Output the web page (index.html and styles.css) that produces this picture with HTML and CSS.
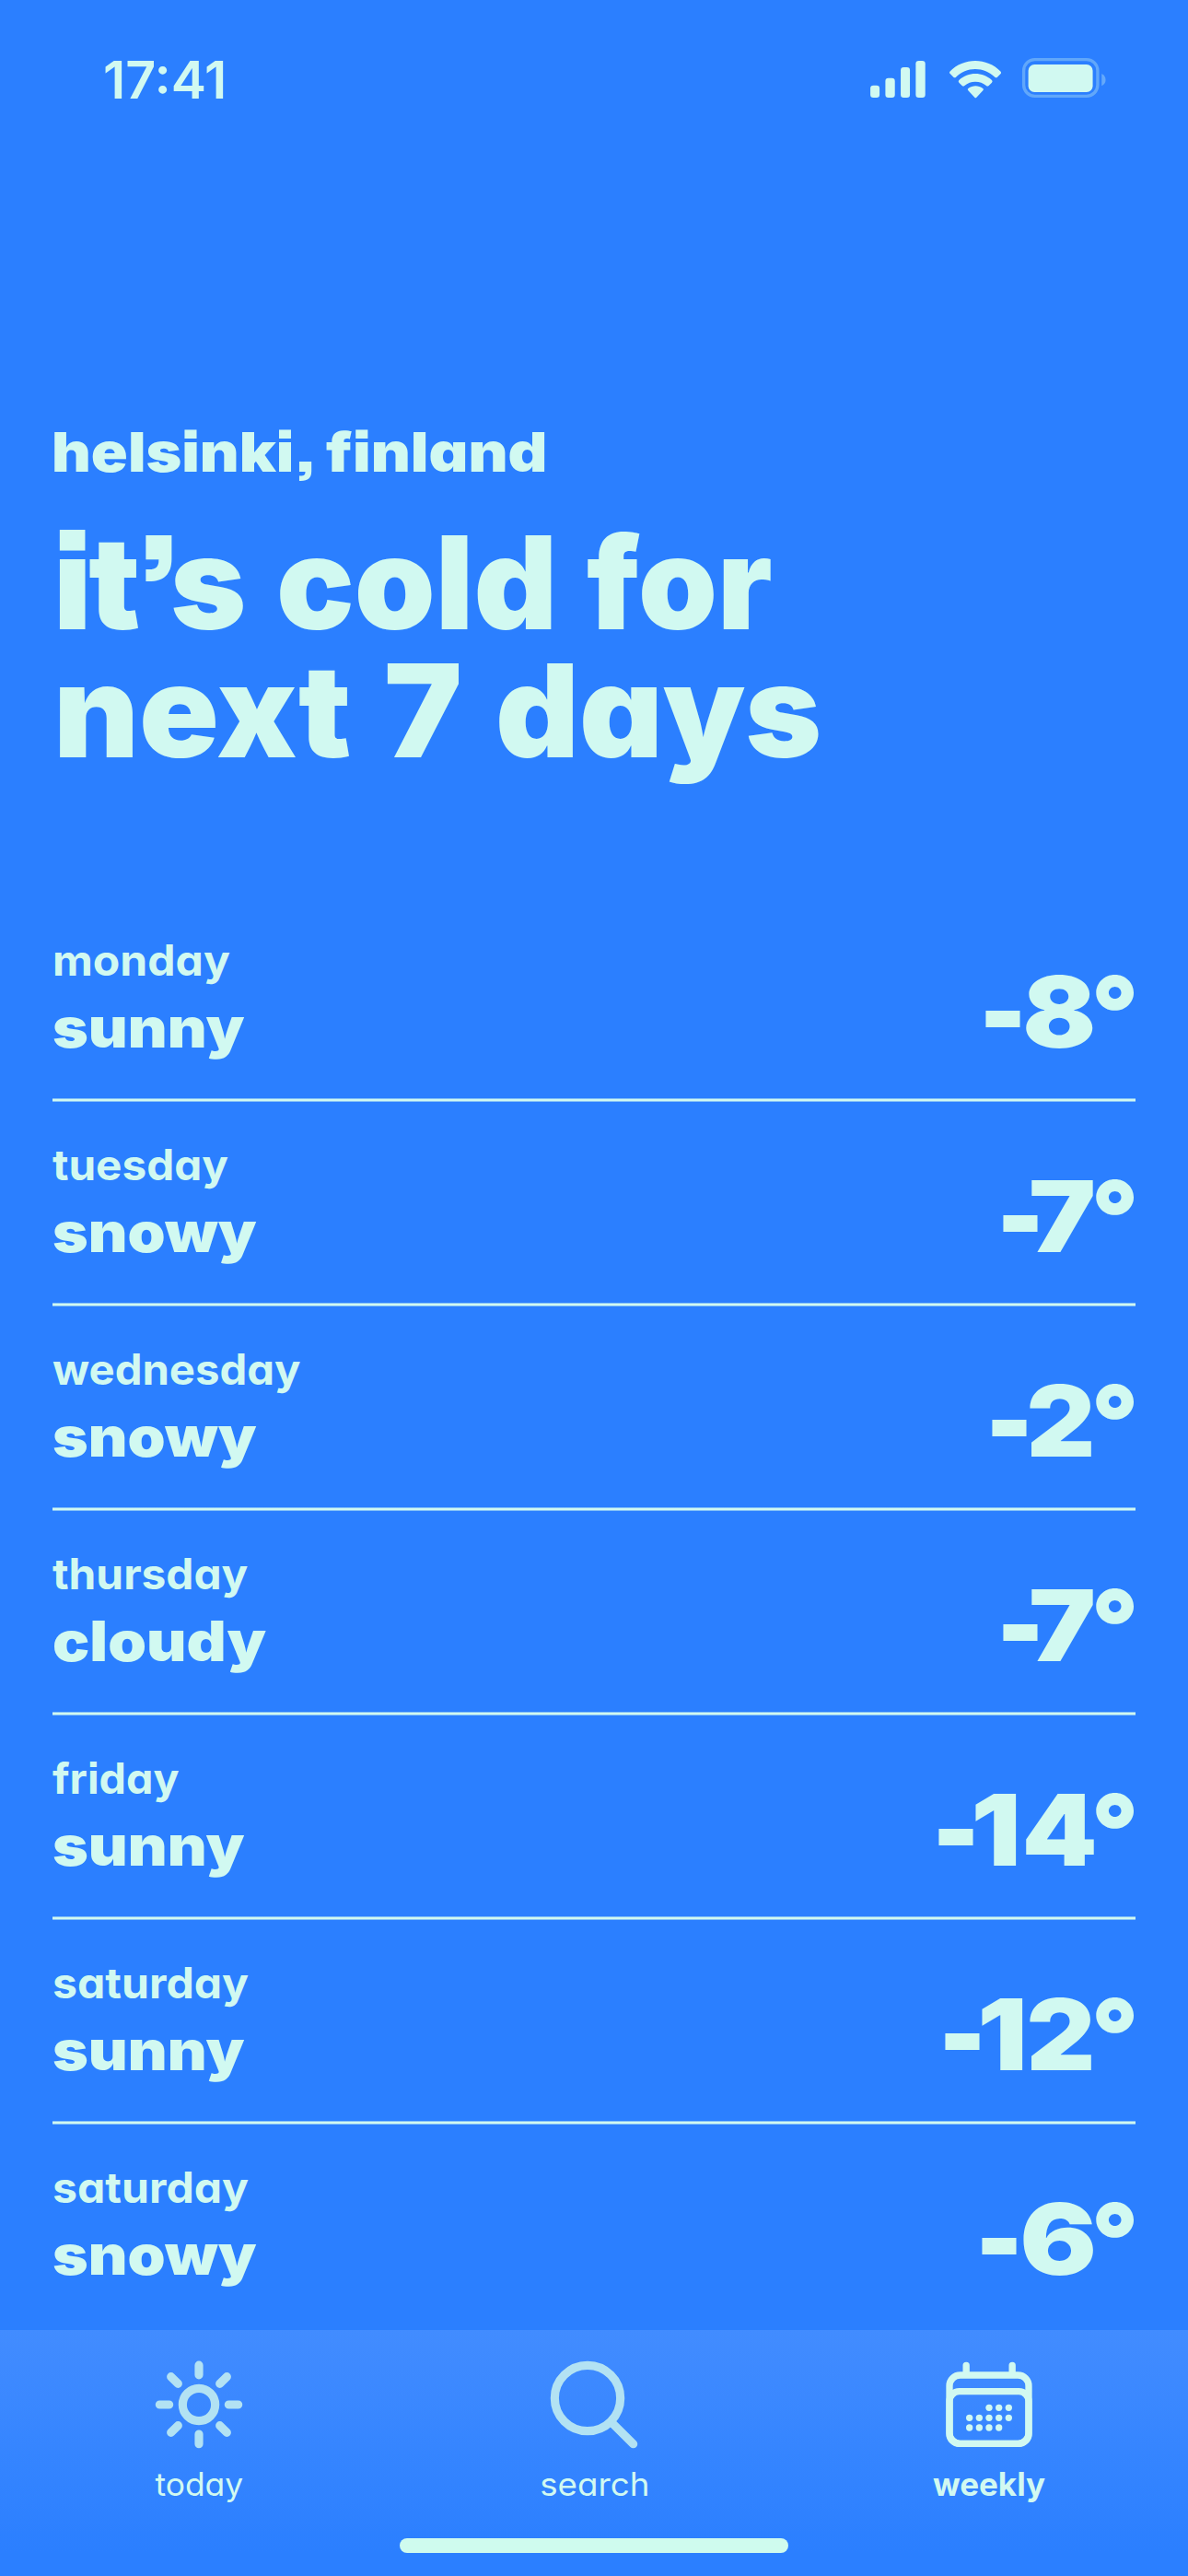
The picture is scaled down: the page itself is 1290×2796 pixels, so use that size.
FILE: index.html
```html
<!DOCTYPE html>
<html lang="en">
<head>
<meta charset="utf-8">
<title>Weekly weather</title>
<link rel="stylesheet" href="styles.css">
</head>
<body>
<div class="screen">
  <header class="status">
    <span class="clock">17:41</span>
    <svg class="status-icons" viewBox="75 60 775 145" aria-hidden="true">
      <rect x="75" y="158" width="30" height="40" rx="10"/>
      <rect x="124" y="134" width="31" height="64" rx="10"/>
      <rect x="174" y="99" width="30" height="99" rx="10"/>
      <rect x="223" y="78" width="31" height="120" rx="10"/>
      <path d="M334 113 C356 90 387 78 417 78 C447 78 478 90 500 113 Q503 117 500 120 L489 131 Q485 134 481 131 C463 114 441 105 417 105 C393 105 371 114 354 131 Q350 134 346 131 L335 120 Q331 117 334 113Z"/>
      <path d="M364 141 C379 127 398 120 417 120 C437 120 456 127 471 141 Q475 145 471 149 L461 159 Q457 162 453 159 C443 150 431 146 417 146 C404 146 392 150 382 159 Q378 162 374 159 L364 149 Q360 145 364 141Z"/>
      <path d="M394 168 C409 157 427 157 442 168 Q446 171 442 175 L421 197 Q418 200 415 197 L394 175 Q390 171 394 168Z"/>
      <rect class="faint-line" x="575" y="74" width="241" height="119" rx="36"/>
      <rect x="590" y="90" width="210" height="90" rx="20"/>
      <path class="faint" d="M829 120 Q842 127 842 140 Q842 153 829 160Z"/>
    </svg>
  </header>

  <main>
    <p class="place"><span class="w-helsinki">helsinki,</span> <span class="w-finland">finland</span></p>
    <h1 class="title">
      <span class="line"><span class="w-its">it’s</span> <span class="w-cold">cold</span> <span class="w-for">for</span></span>
      <span class="line"><span class="w-next">next</span> <span class="w-seven">7</span> <span class="w-days">days</span></span>
    </h1>

    <ul class="days">
      <li class="day"><div><p class="name w-monday">monday</p><p class="sky w-sunny">sunny</p></div><p class="temp"><span class="minus">-</span><span class="d8">8</span><span class="deg">°</span></p></li>
      <li class="day"><div><p class="name w-tuesday">tuesday</p><p class="sky w-snowy">snowy</p></div><p class="temp"><span class="minus">-</span><span class="d7">7</span><span class="deg">°</span></p></li>
      <li class="day"><div><p class="name w-wednesday">wednesday</p><p class="sky w-snowy">snowy</p></div><p class="temp"><span class="minus">-</span><span class="d2">2</span><span class="deg">°</span></p></li>
      <li class="day"><div><p class="name w-thursday">thursday</p><p class="sky w-cloudy">cloudy</p></div><p class="temp"><span class="minus">-</span><span class="d7">7</span><span class="deg">°</span></p></li>
      <li class="day"><div><p class="name w-friday">friday</p><p class="sky w-sunny">sunny</p></div><p class="temp"><span class="minus">-</span><span class="d1">1</span><span class="d4">4</span><span class="deg">°</span></p></li>
      <li class="day"><div><p class="name w-saturday">saturday</p><p class="sky w-sunny">sunny</p></div><p class="temp"><span class="minus">-</span><span class="d1">1</span><span class="d2 after-one">2</span><span class="deg">°</span></p></li>
      <li class="day"><div><p class="name w-saturday">saturday</p><p class="sky w-snowy">snowy</p></div><p class="temp"><span class="minus">-</span><span class="d6">6</span><span class="deg">°</span></p></li>
    </ul>
  </main>

  <nav class="tabs">
    <a class="tab">
      <svg class="tab-icon" viewBox="81 150 288 300" aria-hidden="true">
        <g class="stroke" stroke-width="27.500">
          <circle cx="228" cy="300" r="53"/>
          <path d="M228 171.500V203.500M228 396V428M100 300H131M325 300H356M137 209L160 232M319 209L296 232M137 391L160 368M319 391L296 368"/>
        </g>
      </svg>
      <span class="label w-today">today</span>
    </a>
    <a class="tab">
      <svg class="tab-icon" viewBox="111 150 288 300" aria-hidden="true">
        <g class="stroke" stroke-width="27.500">
          <circle cx="234" cy="279" r="107"/>
          <path d="M312 358L383 428"/>
        </g>
      </svg>
      <span class="label w-search">search</span>
    </a>
    <a class="tab active">
      <svg class="tab-icon" viewBox="141 150 288 300" aria-hidden="true">
        <g class="stroke" stroke-width="22">
          <rect x="153" y="204" width="258" height="223" rx="35"/>
          <rect x="153" y="257" width="258" height="170" rx="32"/>
          <path d="M207.500 172V200M357.500 172V200"/>
        </g>
        <circle cx="282" cy="310" r="11"/><circle cx="314" cy="310" r="11"/><circle cx="346" cy="310" r="11"/>
        <circle cx="218" cy="343" r="11"/><circle cx="250" cy="343" r="11"/><circle cx="282" cy="343" r="11"/><circle cx="314" cy="343" r="11"/><circle cx="346" cy="343" r="11"/>
        <circle cx="218" cy="375" r="11"/><circle cx="250" cy="375" r="11"/><circle cx="282" cy="375" r="11"/><circle cx="314" cy="375" r="11"/>
      </svg>
      <span class="label w-weekly">weekly</span>
    </a>
    <div class="home-bar"></div>
  </nav>
</div>
</body>
</html>
```
FILE: styles.css
```css
* { box-sizing: border-box; margin: 0; padding: 0; }

body {
  background: #2b7fff;
  color: #d1f9f1;
  font-family: Inter, "Liberation Sans", sans-serif;
  /* single-storey a, square punctuation, square quotes */
  font-feature-settings: "cv11", "ss07", "ss08";
}

.screen {
  display: flex;
  flex-direction: column;
  width: 1290px;
  height: 2796px;
  overflow: hidden;
}

/* status bar */
.status {
  display: flex;
  justify-content: space-between;
  height: 461px;
  padding: 56.5px 86.700px 0 111.500px;
}
.clock {
  font-size: 56px;
  font-weight: 600;
  line-height: 60px;
  font-feature-settings: normal;
  transform: scaleX(1.025);
  transform-origin: 0 0;
}
.status-icons { width: 258.300px; height: 48.300px; margin-top: 3.500px; fill: currentColor; }
.faint { opacity: .35; }
.faint-line { fill: none; stroke: currentColor; stroke-width: 10px; opacity: .33; }

/* extended-width text: each word carries its own horizontal stretch */
.place span, .line span, .name, .sky, .temp span, .label {
  transform: scaleX(var(--sx, 1));
  transform-origin: 0 0;
  white-space: nowrap;
}
.w-helsinki { --sx: 1.119; width: 298px; }
.w-finland { --sx: 1.126; }
.w-its { width: 241.700px; letter-spacing: -3.200px; }
.w-cold { --sx: 1.005; width: 337.200px; }
.w-for { --sx: .982; }
.w-next { --sx: 1.023; width: 358.500px; }
.w-seven { --sx: 1.02; width: 121.300px; }
.w-days { --sx: 1.006; }
.w-monday { --sx: 1.045; }
.w-tuesday { --sx: 1.036; }
.w-wednesday { --sx: 1.027; }
.w-thursday { --sx: 1.039; }
.w-friday { --sx: 1.015; }
.w-saturday { --sx: 1.047; }
.w-sunny { --sx: 1.102; }
.w-snowy { --sx: 1.097; }
.w-cloudy { --sx: 1.115; }
.w-today { --sx: 1.013; }
.w-search { --sx: 1.049; }

/* heading */
.place {
  display: flex;
  padding-left: 56px;
  font-size: 59px;
  font-weight: 900;
  line-height: 60px;
}
.title {
  padding: 42.400px 0 0 58px;
  font-size: 140px;
  font-weight: 900;
  line-height: 138.300px;
}
.line { display: flex; }

/* forecast list */
.days {
  list-style: none;
  margin-top: 134px;
  padding: 0 57px;
}
.day {
  display: flex;
  justify-content: space-between;
  height: 222px;
  padding-top: 40.300px;
  background: linear-gradient(#d1f9f18c 0 1px, #d1f9f1 1px 3px, #d1f9f18c 3px) 0 100% / 100% 4px no-repeat;
}
.day:last-child { background: none; }
.name { font-size: 46px; font-weight: 700; line-height: 56px; }
.sky { margin-top: 9px; font-size: 60px; font-weight: 900; line-height: 72px; }

/* each digit box is as wide as its ink, so the gaps are set by margins */
.temp {
  display: flex;
  padding: 30.300px 1px 0 0;
  font-size: 107px;
  font-weight: 900;
  line-height: 107px;
  font-feature-settings: normal;
}
.temp span { transform: scaleX(var(--sx)) translateX(var(--lead)); --lead: -3.300px; }
.temp .minus { --lead: -6.700px; width: 39px; transform: scale(1.014, 1.14) translateX(var(--lead)); transform-origin: 0 62px; }
.temp .d8 { --sx: 1.102; width: 73.700px; margin: 0 2.300px 0 5px; }
.temp .d7 { --sx: 1.146; --lead: -1.700px; width: 69px; margin: 0 2.300px 0 -9px; }
.temp .d2 { --sx: 1.083; width: 67px; margin: 0 5.300px 0 1.500px; }
.temp .d2.after-one { margin-left: 8px; }
.temp .d1 { --sx: 1.126; width: 45.200px; }
.temp .d4 { --sx: 1.094; width: 75px; margin: 0 2.300px 0 9.500px; }
.temp .d6 { --sx: 1.161; width: 75.700px; margin: 0 3.600px 0 5.700px; }
.temp .deg { --sx: 1.047; --lead: -5px; width: 42px; margin-top: -1px; }

/* tab bar */
.tabs {
  position: relative;
  display: grid;
  grid-template-columns: repeat(3, 1fr);
  flex: none;
  height: 267px;
  margin-top: auto;
  padding-top: 31px;
  background: linear-gradient(#428cff, #2b7fff 90%);
}
.tab { display: flex; flex-direction: column; align-items: center; gap: 16.300px; }
.tab-icon { width: 96px; height: 100px; overflow: visible; fill: currentColor; opacity: .8; }
.active .tab-icon { opacity: 1; }
.stroke { fill: none; stroke: currentColor; stroke-linecap: round; }
.tab .label { margin-left: 2px; font-size: 35px; line-height: 40px; transform-origin: 50% 0; }
.active .label { margin-left: -2px; font-weight: 700; }
.home-bar {
  position: absolute;
  left: 434px;
  top: 226px;
  width: 422px;
  height: 16px;
  border-radius: 8px;
  background: #cffbee;
}
```
